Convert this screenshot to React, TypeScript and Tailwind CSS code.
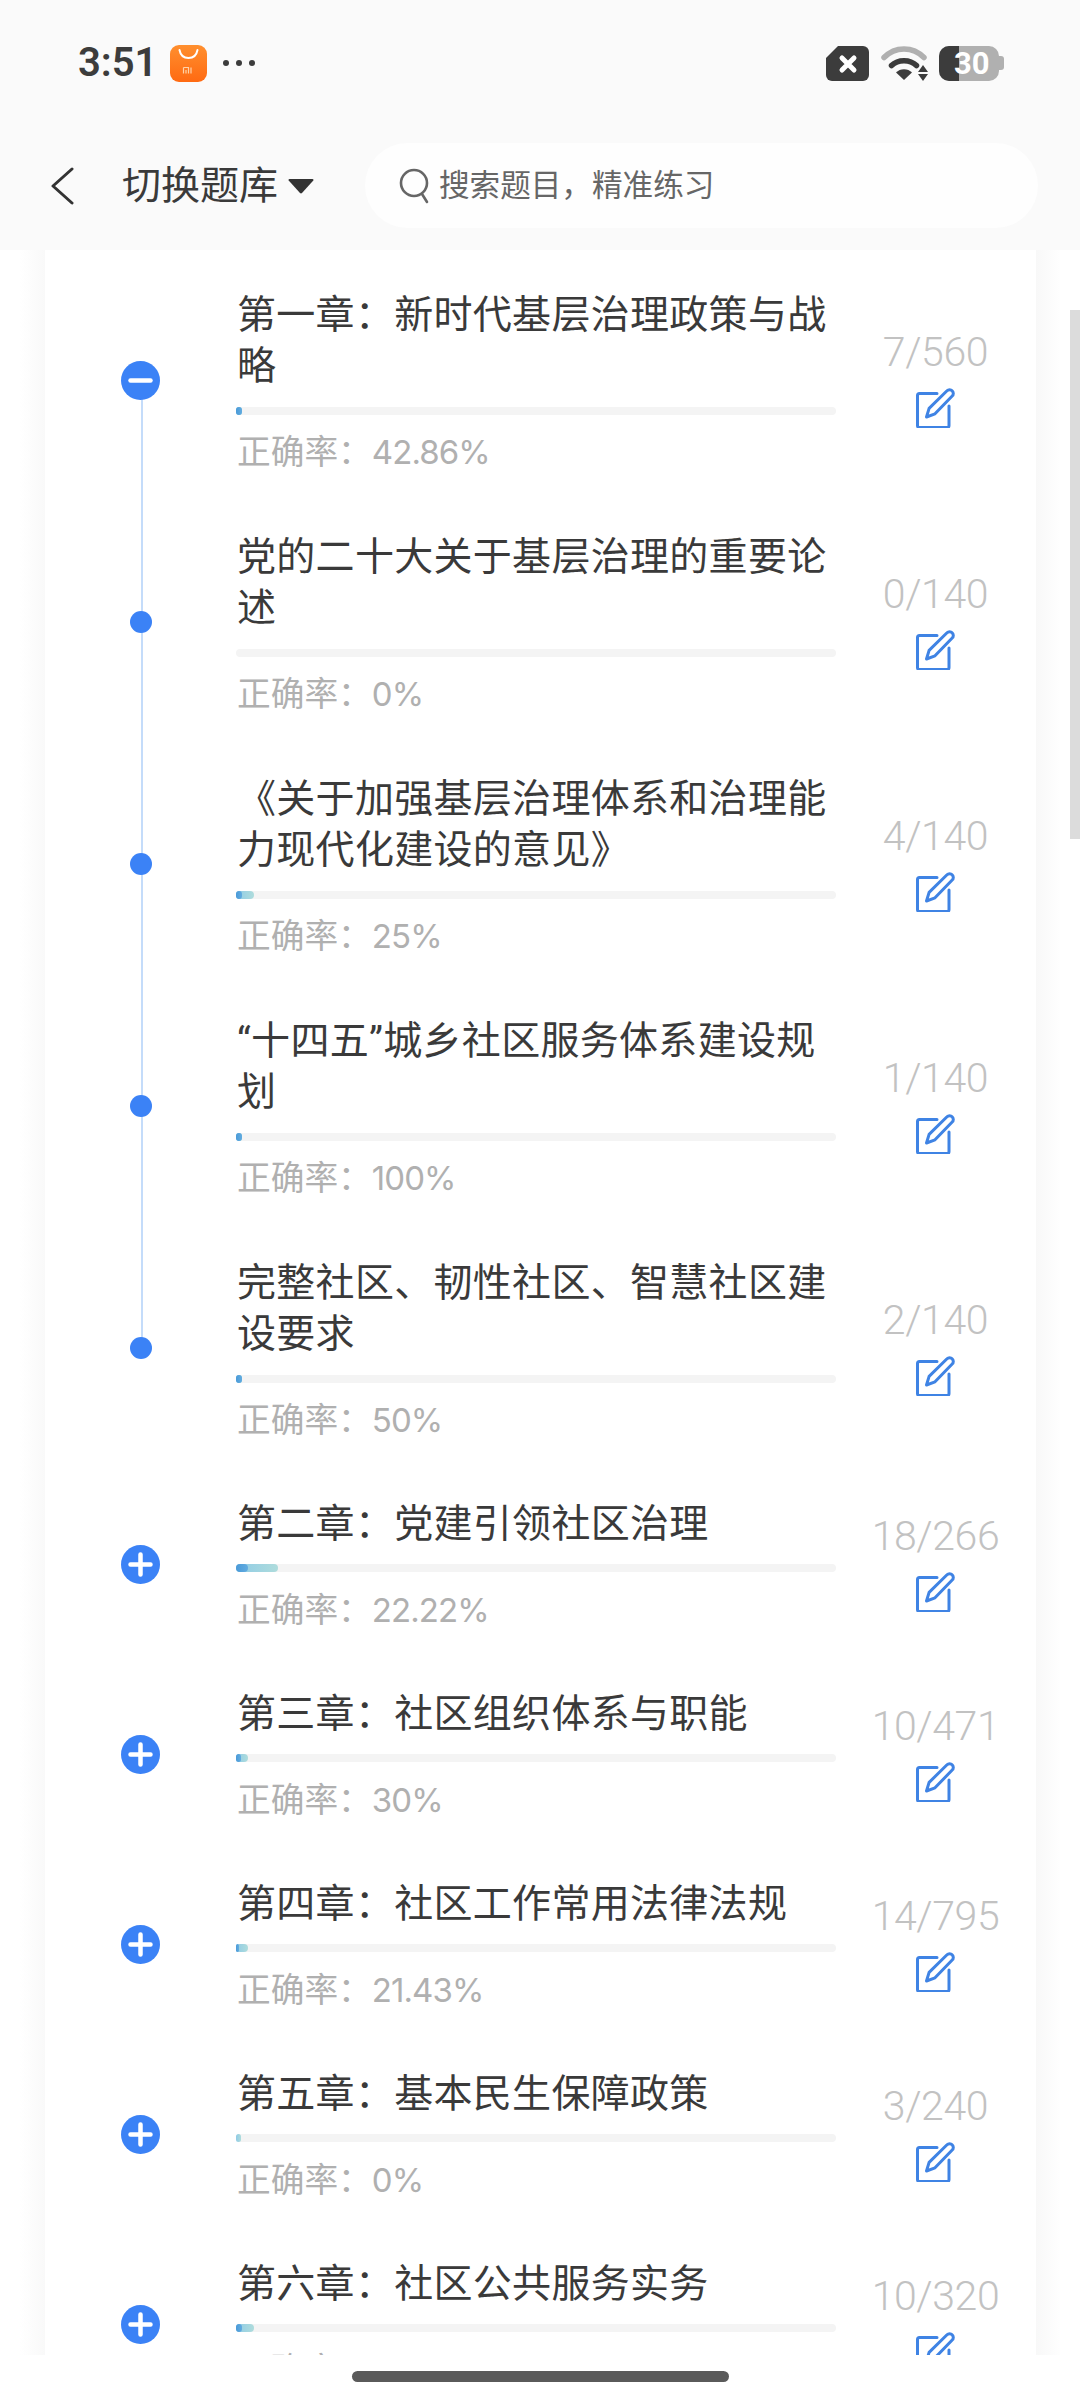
import React from "react";

const font = { fontFamily: '"Roboto", "Noto Sans CJK SC", sans-serif' };

type Row = { title: string; rate: string; count: string; done: number; right: number; two: boolean };

const rows: Row[] = [
  { title: "第一章：新时代基层治理政策与战略", rate: "42.86%", count: "7/560", done: 6, right: 6, two: true },
  { title: "党的二十大关于基层治理的重要论述", rate: "0%", count: "0/140", done: 0, right: 0, two: true },
  { title: "《关于加强基层治理体系和治理能力现代化建设的意见》", rate: "25%", count: "4/140", done: 18, right: 6, two: true },
  { title: "“十四五”城乡社区服务体系建设规划", rate: "100%", count: "1/140", done: 6, right: 6, two: true },
  { title: "完整社区、韧性社区、智慧社区建设要求", rate: "50%", count: "2/140", done: 6, right: 6, two: true },
  { title: "第二章：党建引领社区治理", rate: "22.22%", count: "18/266", done: 42, right: 12, two: false },
  { title: "第三章：社区组织体系与职能", rate: "30%", count: "10/471", done: 12, right: 5, two: false },
  { title: "第四章：社区工作常用法律法规", rate: "21.43%", count: "14/795", done: 12, right: 3, two: false },
  { title: "第五章：基本民生保障政策", rate: "0%", count: "3/240", done: 5, right: 0, two: false },
  { title: "第六章：社区公共服务实务", rate: "0%", count: "10/320", done: 18, right: 6, two: false },
];

function EditIcon() {
  return (
    <svg width="40" height="40" viewBox="0 0 40 40" fill="none" stroke="#3f83e4" strokeWidth="3" strokeLinejoin="round" strokeLinecap="round">
      <path d="M21 5.5H3.5a2 2 0 0 0-2 2V37.5a2 2 0 0 0 2 2H31a2 2 0 0 0 2-2V18" />
      <path d="M10.5 29l2.6-8.6L31 2.8a3.6 3.6 0 0 1 5.2 0 3.6 3.6 0 0 1 0 5.2L19 25.8Z" />
    </svg>
  );
}

function Marker({ kind }: { kind: "minus" | "plus" | "dot" }) {
  if (kind === "dot") return <div className="relative z-10 h-[22px] w-[22px] rounded-full bg-[#3b82f6]" />;
  return (
    <svg className="relative z-10" width="39" height="39" viewBox="0 0 39 39">
      <circle cx="19.5" cy="19.5" r="19.5" fill="#3b82f6" />
      <path d={kind === "minus" ? "M9.5 19.5h20" : "M9.5 19.5h20M19.5 9.5v20"} stroke="#fff" strokeWidth="4.5" strokeLinecap="round" />
    </svg>
  );
}

function ChapterRow({ row, index }: { row: Row; index: number }) {
  const kind = index === 0 ? "minus" : index < 5 ? "dot" : "plus";
  return (
    <div className={`flex ${row.two ? "h-[242px]" : "h-[190px]"}`}>
      <div className="relative flex w-[191px] shrink-0 items-center justify-center">
        {index < 4 && <div className="absolute left-[96px] top-1/2 h-full w-[2px] bg-[#c4dcfa]" />}
        <Marker kind={kind} />
      </div>
      <div className={`w-[600px] shrink-0 ${row.two ? "pt-[31px]" : "pt-[30px]"}`}>
        <div className="pl-[1px] text-[39px] leading-[51px] tracking-[0.3px] text-[#3a3a3a]">{row.title}</div>
        <div className={`h-[8px] rounded-full bg-[#f4f4f4] ${row.two ? "mt-[15px]" : "mt-[14px]"}`}>
          {row.done > 0 && (
            <div className="h-full rounded-full bg-linear-to-r from-[#8fcbe6] to-[#aedcdc]" style={{ width: row.done }}>
              {row.right > 0 && (
                <div className="h-full rounded-full bg-linear-to-r from-[#4a9ad8] to-[#62ace0]" style={{ width: row.right }} />
              )}
            </div>
          )}
        </div>
        <div className={`pl-[1px] text-[33.7px] leading-[44px] text-[#b0b0b0] ${row.two ? "mt-[15px]" : "mt-[16px]"}`}>
          正确率：<span className="font-['Inter'] text-[33px] tracking-[-0.9px]">{row.rate}</span>
        </div>
      </div>
      <div className="flex w-[199px] shrink-0 flex-col items-center justify-center gap-[11px] pb-[6px]">
        <div className="text-[41px] font-light leading-[50px] tracking-[-0.4px] text-[#c2c2c2]">{row.count}</div>
        <EditIcon />
      </div>
    </div>
  );
}

function StatusBar() {
  return (
    <div className="flex h-[126px] items-center pl-[78px] pr-[76px]">
      <div className="w-[73px] text-[40px] font-semibold leading-none text-[#3c3c3c]">3:51</div>
      <svg className="ml-[19px]" width="37" height="37" viewBox="0 0 37 37">
        <defs>
          <linearGradient id="mi" x1="0" y1="0" x2="0" y2="1">
            <stop offset="0" stopColor="#ff8f2e" />
            <stop offset="1" stopColor="#ff6a12" />
          </linearGradient>
        </defs>
        <rect width="37" height="37" rx="9" fill="url(#mi)" />
        <path d="M9.5 5c1 5.5 4 8 9 8s8-2.5 9-8" fill="none" stroke="#fff" strokeWidth="2" strokeLinecap="round" />
        <path d="M13.5 22.5h5v6M13.5 22.5v6M16 25v3.5M21 22.5v6" fill="none" stroke="#ffd2a8" strokeWidth="1.2" />
      </svg>
      <div className="ml-[16px] flex gap-[7px]">
        <div className="h-[6px] w-[6px] rounded-full bg-[#3c3c3c]" />
        <div className="h-[6px] w-[6px] rounded-full bg-[#3c3c3c]" />
        <div className="h-[6px] w-[6px] rounded-full bg-[#3c3c3c]" />
      </div>
      <div className="ml-auto flex items-center">
        <svg width="43" height="35" viewBox="0 0 43 35">
          <path d="M12 0H37a6 6 0 0 1 6 6V29a6 6 0 0 1-6 6H6a6 6 0 0 1-6-6V12Z" fill="#3c3c3c" />
          <path d="M16 12l12 12M28 12L16 24" stroke="#fff" strokeWidth="5" strokeLinecap="round" />
        </svg>
        <svg className="ml-[12px]" width="47" height="35" viewBox="0 0 47 35">
          <path d="M3 11.5C14 0 32 0 43 11.5" fill="none" stroke="#b0b0b0" strokeWidth="5.5" strokeLinecap="round" />
          <path d="M10.5 19.5C17 13 29 13 35.5 19.5" fill="none" stroke="#3c3c3c" strokeWidth="5.5" strokeLinecap="round" />
          <path d="M15 26.5C19 22 27 22 31 26.5L23 34Z" fill="#3c3c3c" />
          <path d="M42 19l5 7H37ZM42 35l5-7H37Z" fill="#3c3c3c" />
        </svg>
        <div className="ml-[11px] flex items-center">
          <div className="relative h-[35px] w-[60px] overflow-hidden rounded-[10px] bg-[#b0b0b0]">
            <div className="h-full w-[20px] bg-[#3c3c3c]" />
            <div className="absolute left-[15px] top-0 text-[31px] font-bold leading-[35px] text-white">30</div>
          </div>
          <div className="h-[14px] w-[5px] rounded-r-[3px] bg-[#b0b0b0]" />
        </div>
      </div>
    </div>
  );
}

function NavBar() {
  return (
    <div className="mt-[17px] flex h-[85px] items-center pl-[50px]">
      <svg width="24" height="38" viewBox="0 0 24 38" fill="none" stroke="#333333" strokeWidth="3" strokeLinecap="round" strokeLinejoin="round">
        <path d="M22 2L3 19l19 17" />
      </svg>
      <div className="ml-[48px] w-[156px] text-[39px] leading-[50px] text-[#3a3a3a]">切换题库</div>
      <svg className="ml-[10px]" width="26" height="16" viewBox="0 0 26 16">
        <path d="M1.5 1h23a1 1 0 0 1 .8 1.6L14 15a1.5 1.5 0 0 1-2 0L.7 2.6A1 1 0 0 1 1.5 1Z" fill="#333333" />
      </svg>
      <div className="ml-[51px] flex h-[85px] w-[673px] items-center rounded-full bg-[#fefefe] pl-[34px]">
        <svg width="32" height="36" viewBox="0 0 32 36" fill="none" stroke="#666666" strokeWidth="2.6" strokeLinecap="round">
          <circle cx="15" cy="15" r="13" />
          <path d="M23 26l5 8" />
        </svg>
        <div className="ml-[8px] text-[30.6px] leading-[40px] text-[#666666]">搜索题目，精准练习</div>
      </div>
    </div>
  );
}

export default function App() {
  return (
    <div className="flex h-[2400px] w-[1080px] flex-col overflow-hidden bg-white" style={font}>
      <div className="h-[250px] shrink-0 bg-[#fafafa]">
        <StatusBar />
        <NavBar />
      </div>
      <div className="flex h-[2105px] shrink-0 overflow-hidden">
        <div className="w-[20px] shrink-0" />
        <div className="w-[25px] shrink-0 bg-linear-to-r from-white to-[#f9f9f9]" />
        <div className="h-[2200px] w-[991px] shrink-0 bg-white pt-[9px]">
          {rows.map((r, i) => (
            <ChapterRow key={r.title} row={r} index={i} />
          ))}
        </div>
        <div className="w-[24px] shrink-0 bg-linear-to-r from-[#f8f8f8] to-[#fefefe]" />
        <div className="w-[10px] shrink-0" />
        <div className="w-[10px] shrink-0 pt-[60px]">
          <div className="h-[529px] bg-[#dcdcdc]" />
        </div>
      </div>
      <div className="flex h-[45px] shrink-0 justify-center bg-white pt-[16px]">
        <div className="h-[11px] w-[377px] rounded-full bg-[#5a5a5a]" />
      </div>
    </div>
  );
}
